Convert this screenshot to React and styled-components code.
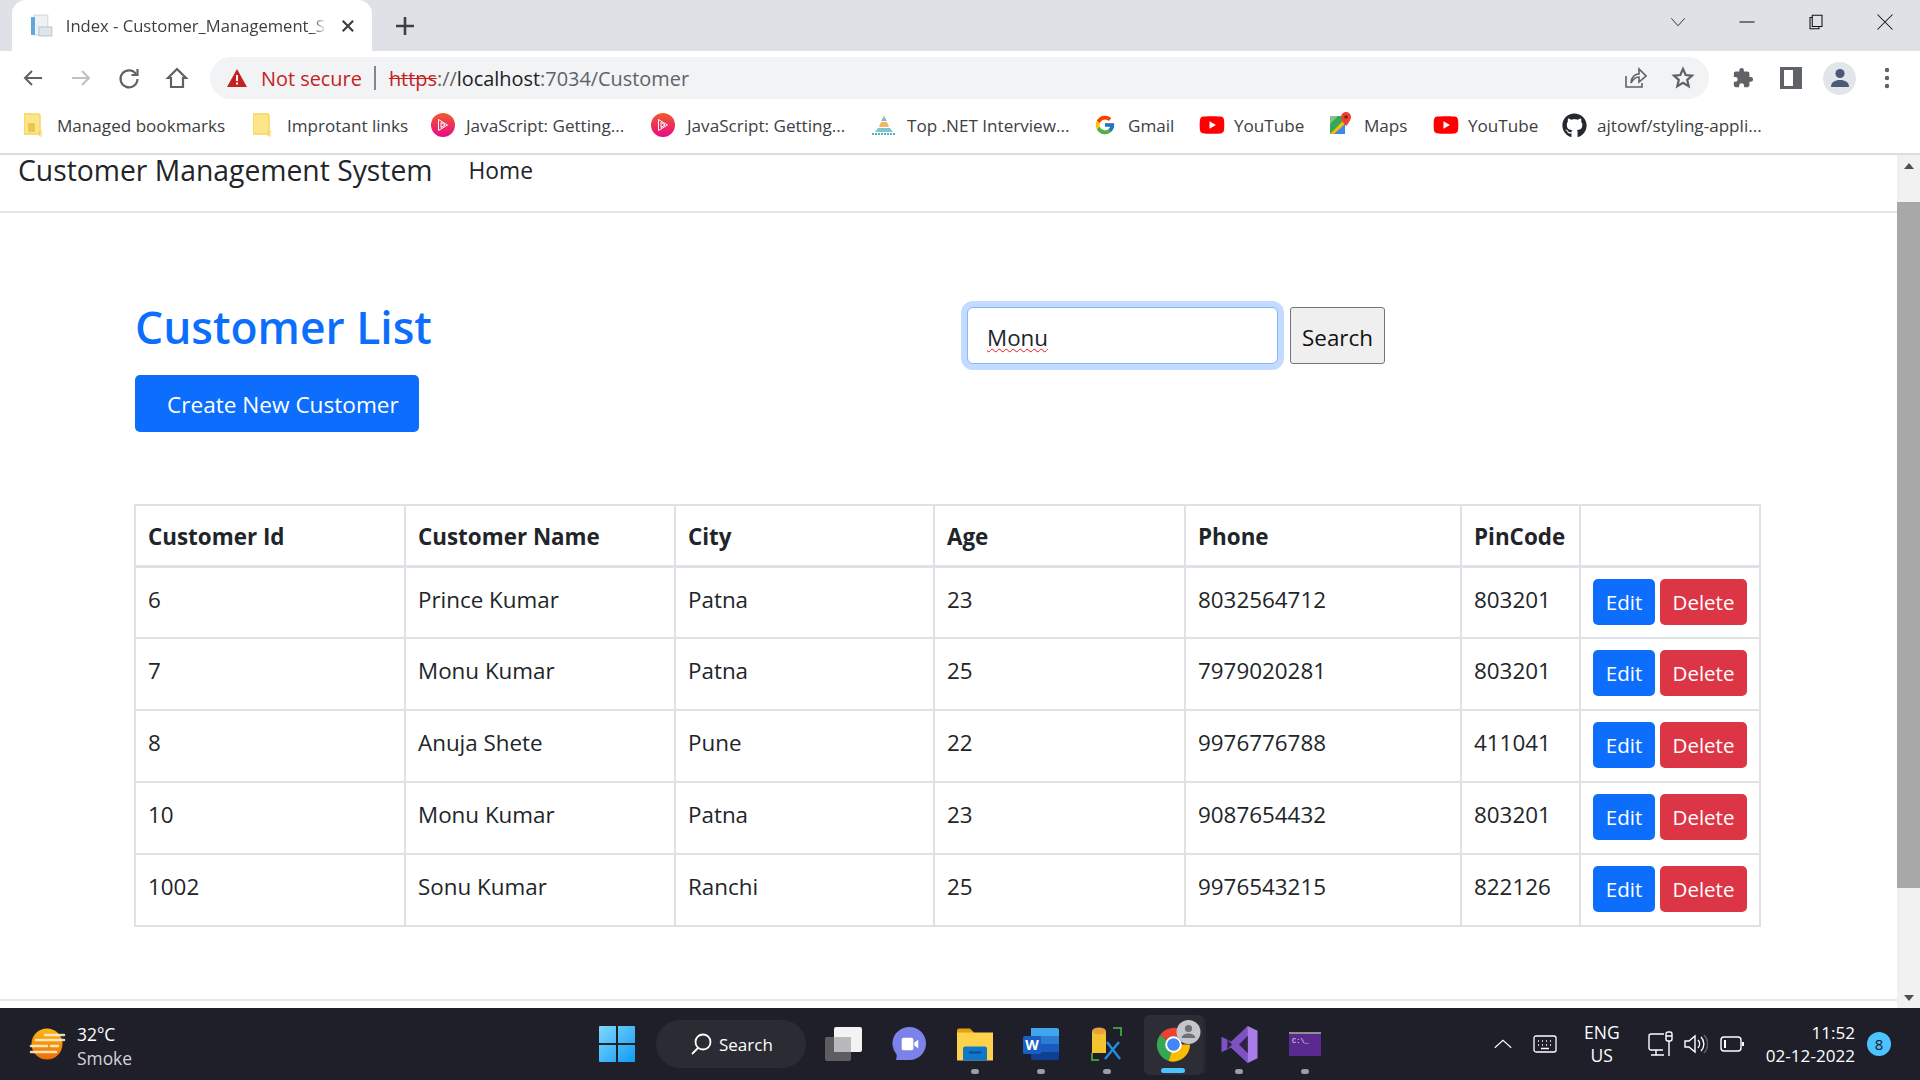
import styled, { createGlobalStyle } from "styled-components";
import { FaGithub, FaYoutube } from "react-icons/fa";
import { FcGoogle } from "react-icons/fc";

const GlobalStyle = createGlobalStyle`
  html, body {
    margin: 0;
    padding: 0;
    background: #fff;
    overflow: hidden;
  }
  body {
    font-family: "Open Sans", "Noto Sans", sans-serif;
    color: #212529;
  }
  * {
    box-sizing: border-box;
  }
`;

const bookmarks = [
  { icon: "managed", label: "Managed bookmarks", width: 229, slot: 33 },
  { icon: "folder", label: "Improtant links", width: 178, slot: 34 },
  { icon: "pluralsight", label: "JavaScript: Getting...", width: 220, slot: 35 },
  { icon: "pluralsight", label: "JavaScript: Getting...", width: 221, slot: 36 },
  { icon: "pyramid", label: "Top .NET Interview...", width: 222, slot: 35 },
  { icon: "google", label: "Gmail", width: 105, slot: 34 },
  { icon: "youtube", label: "YouTube", width: 131, slot: 35 },
  { icon: "maps", label: "Maps", width: 103, slot: 34 },
  { icon: "youtube", label: "YouTube", width: 129, slot: 35 },
  { icon: "github", label: "ajtowf/styling-appli...", width: 210, slot: 35 },
];

const customers = [
  { id: 6, name: "Prince Kumar", city: "Patna", age: 23, phone: "8032564712", pin: "803201" },
  { id: 7, name: "Monu Kumar", city: "Patna", age: 25, phone: "7979020281", pin: "803201" },
  { id: 8, name: "Anuja Shete", city: "Pune", age: 22, phone: "9976776788", pin: "411041" },
  { id: 10, name: "Monu Kumar", city: "Patna", age: 23, phone: "9087654432", pin: "803201" },
  { id: 1002, name: "Sonu Kumar", city: "Ranchi", age: 25, phone: "9976543215", pin: "822126" },
];

const columnWidths = [270, 270, 259, 251, 276, 119, 180];

const FolderIcon = ({ managed }) => (
  <svg width="18" height="24" viewBox="0 0 18 24">
    <path d="M0 1h14a2 2 0 0 1 2 2v18H0z" fill="#fde68a" stroke="#f5d35d" strokeWidth="1.4" />
    <rect x="15" y="18" width="3" height="5" rx="1" fill="none" stroke="#f5d35d" />
    {managed && <rect x="4" y="10" width="7" height="9" fill="#e9c84f" />}
  </svg>
);

const PluralsightIcon = () => (
  <svg width="24" height="24" viewBox="0 0 24 24">
    <defs>
      <linearGradient id="ps" x1="0" y1="0" x2="0" y2="1">
        <stop offset="0" stopColor="#f15b2a" />
        <stop offset="1" stopColor="#e80a89" />
      </linearGradient>
    </defs>
    <circle cx="12" cy="12" r="12" fill="url(#ps)" />
    <path d="M7.5 6.5v11l9-5.5zM10 9.5v5l4-2.5z" fill="none" stroke="#fff" strokeWidth="1" />
  </svg>
);

const PyramidIcon = () => (
  <svg width="24" height="22" viewBox="0 0 24 22">
    <path d="M12 2 15 7H9z" fill="#8fb8c0" />
    <path d="M9 8h6l2 5H7z" fill="#f3b562" />
    <path d="M6 14h12l3 4H3z" fill="#7fc4cf" />
    <path d="M0 20h24" stroke="#4eb4c4" strokeWidth="2" strokeDasharray="2 1" />
  </svg>
);

const MapsIcon = () => (
  <svg width="22" height="26" viewBox="0 0 22 26">
    <path d="M0 4h15v18H0z" fill="#34a853" />
    <path d="M0 22 15 7v15z" fill="#fbbc04" />
    <path d="M4 22 15 12v10z" fill="#4285f4" />
    <path d="M0 4h8L0 12z" fill="#7cc48b" />
    <path d="M16 0a5 5 0 0 1 5 5c0 4-5 9-5 9s-5-5-5-9a5 5 0 0 1 5-5z" fill="#ea4335" />
    <circle cx="16" cy="5" r="1.8" fill="#8c1c13" />
  </svg>
);

const BookmarkIcon = ({ kind }) => {
  if (kind === "managed") return <FolderIcon managed />;
  if (kind === "folder") return <FolderIcon />;
  if (kind === "pluralsight") return <PluralsightIcon />;
  if (kind === "pyramid") return <PyramidIcon />;
  if (kind === "google") return <FcGoogle size={22} />;
  if (kind === "youtube") return <FaYoutube size={26} color="#ff0000" />;
  if (kind === "maps") return <MapsIcon />;
  return <FaGithub size={25} color="#24292f" />;
};

const Stroke = ({ size = 24, children, color = "#5f6368", width = 2 }) => (
  <svg width={size} height={size} viewBox="0 0 24 24" fill="none" stroke={color} strokeWidth={width}>
    {children}
  </svg>
);

const WindowsLogo = () => (
  <svg width="36" height="36" viewBox="0 0 36 36">
    <defs>
      <linearGradient id="win" x1="0" y1="0" x2="1" y2="1">
        <stop offset="0" stopColor="#7fd8fb" />
        <stop offset="1" stopColor="#0f9bf5" />
      </linearGradient>
    </defs>
    <path d="M1 0h16v17H0V1a1 1 0 0 1 1-1zM19 0h16a1 1 0 0 1 1 1v16H19zM0 19h17v17H1a1 1 0 0 1-1-1zM19 19h17v16a1 1 0 0 1-1 1H19z" fill="url(#win)" />
  </svg>
);

const WeatherIcon = () => (
  <svg width="38" height="32" viewBox="0 0 38 32">
    <defs>
      <linearGradient id="sun" x1="0" y1="0" x2="0" y2="1">
        <stop offset="0" stopColor="#fdb813" />
        <stop offset="1" stopColor="#ee6c05" />
      </linearGradient>
    </defs>
    <circle cx="19" cy="16" r="15.5" fill="url(#sun)" />
    <path d="M17 7h19M8 12h28M3 18h16M23 18h7M3 24h25" stroke="#fff2d4" strokeWidth="2.6" strokeLinecap="round" opacity=".88" />
  </svg>
);

const TaskViewIcon = () => (
  <svg width="37" height="34" viewBox="0 0 37 34">
    <rect x="0" y="10" width="26" height="24" rx="2" fill="#5d5d5f" />
    <rect x="9" y="0" width="28" height="25" rx="2" fill="#f3f3f3" />
    <rect x="9" y="10" width="17" height="15" fill="#b9b9bb" />
  </svg>
);

const ChatIcon = () => (
  <svg width="35" height="35" viewBox="0 0 36 36">
    <path d="M18 0a17 17 0 0 1 0 34H4c1-2 1-5 .5-6A17 17 0 0 1 18 0z" fill="#7b83eb" />
    <rect x="10" y="11" width="12" height="13" rx="2" fill="#fff" />
    <path d="M23 16l4-3v9l-4-3z" fill="#fff" />
  </svg>
);

const ExplorerIcon = () => (
  <svg width="36" height="33" viewBox="0 0 36 32">
    <path d="M0 2a2 2 0 0 1 2-2h11l4 4v6H0z" fill="#e2a20a" />
    <path d="M0 4h36v28H0z" fill="#ffd24d" />
    <path d="M6 20a2 2 0 0 1 2-2h20a2 2 0 0 1 2 2v12H6z" fill="#0f78c9" />
    <rect x="12" y="23" width="12" height="2" fill="#0a4f8a" />
  </svg>
);

const WordIcon = () => (
  <svg width="36" height="32" viewBox="0 0 36 32">
    <path d="M8 0h26a2 2 0 0 1 2 2v6H8z" fill="#41a5ee" />
    <path d="M8 8h28v8H8z" fill="#2b7cd3" />
    <path d="M8 16h28v8H8z" fill="#185abd" />
    <path d="M8 24h28v6a2 2 0 0 1-2 2H8z" fill="#103f91" />
    <rect x="0" y="8" width="18" height="18" rx="1.5" fill="#1a5fc2" />
    <text x="9" y="22" fill="#fff" fontSize="14" fontWeight="700" textAnchor="middle" fontFamily="Open Sans">W</text>
  </svg>
);

const DbToolIcon = () => (
  <svg width="32" height="34" viewBox="0 0 32 34" fill="none">
    <path d="M1 4h14v22H1z" fill="#f4c430" />
    <ellipse cx="8" cy="4" rx="7" ry="3.5" fill="#e8a13c" />
    <path d="M22 1h8v8M1 26v7h7" stroke="#3c9a3c" strokeWidth="2" />
    <path d="M14 32 28 15M29 32 16 15" stroke="#1f8fe0" strokeWidth="2.4" />
  </svg>
);

const ChromeIcon = () => (
  <svg width="37" height="37" viewBox="0 0 38 38">
    <path d="M19 19 5 9.5A17.5 17.5 0 0 1 35 11H19z" fill="#ea4335" />
    <path d="M19 19 5 9.5A17.5 17.5 0 0 0 14 36z" fill="#34a853" />
    <path d="M19 19h17A17.5 17.5 0 0 1 14 36z" fill="#fbbc04" />
    <circle cx="19" cy="19" r="8.5" fill="#fff" />
    <circle cx="19" cy="19" r="6.5" fill="#4285f4" />
  </svg>
);

const ProfileBubble = () => (
  <svg width="25" height="24" viewBox="0 0 24 24">
    <circle cx="12" cy="12" r="12" fill="#c4c6ca" />
    <circle cx="12" cy="8.5" r="3.6" fill="#6d7278" />
    <path d="M5 18c1-3.5 4-4.5 7-4.5s6 1 7 4.5z" fill="#6d7278" />
  </svg>
);

const VisualStudioIcon = () => (
  <svg width="37" height="37" viewBox="0 0 37 38">
    <path d="M27 0 37 5v28l-10 5-17-16z" fill="#a97de8" />
    <path d="M27 0v38l-17-16L0 27V11l10 5z" fill="#7d53c4" />
    <path d="M6 14v10l5-5zM27 10l-9 9 9 9z" fill="#2f2340" />
  </svg>
);

const TerminalIcon = () => (
  <svg width="32" height="24" viewBox="0 0 32 24">
    <rect width="32" height="24" fill="#5b2a91" />
    <rect width="32" height="2" fill="#8d8d92" />
    <text x="3" y="11" fill="#e8e8e8" fontSize="7" fontFamily="Liberation Mono">C:\_</text>
  </svg>
);

const taskbarApps = [
  { icon: <TaskViewIcon /> },
  { icon: <ChatIcon /> },
  { icon: <ExplorerIcon />, dot: true },
  { icon: <WordIcon />, dot: true },
  { icon: <DbToolIcon />, dot: true },
  { icon: <ChromeIcon />, active: true },
  { icon: <VisualStudioIcon />, dot: true },
  { icon: <TerminalIcon />, dot: true },
];

export default function App() {
  return (
    <>
      <GlobalStyle />
      <Screen>
        <TabStrip>
          <Tab>
            <svg width="24" height="24" viewBox="0 0 24 24">
              <rect x="4" y="1" width="14" height="20" fill="#eef1f5" stroke="#cfd6de" />
              <rect x="1" y="3" width="4" height="18" fill="#5fa8dc" />
              <rect x="9" y="13" width="13" height="9" fill="#dfe5ec" stroke="#b9c3cf" />
            </svg>
            <TabTitle>Index - Customer_Management_S</TabTitle>
            <Stroke size={18} color="#3c4043" width={3}>
              <path d="M5 5l14 14M19 5 5 19" />
            </Stroke>
          </Tab>
          <NewTab>
            <Stroke size={24} color="#3c4043" width={2.6}>
              <path d="M12 3v18M3 12h18" />
            </Stroke>
          </NewTab>
          <WindowControls>
            <Stroke size={18} color="#222" width={1.2}>
              <path d="M3 7l9 10 9-10" />
            </Stroke>
            <Stroke size={18} color="#111" width={1.4}>
              <path d="M2 12h20" />
            </Stroke>
            <Stroke size={18} color="#111" width={1.4}>
              <path d="M7 6h-3v15h12v-3M7 18V3h13v15z" />
            </Stroke>
            <Stroke size={18} color="#111" width={1.4}>
              <path d="M2 2l20 20M22 2 2 22" />
            </Stroke>
          </WindowControls>
        </TabStrip>

        <Toolbar>
          <NavIcons>
            <Stroke color="#5f6368" width={2}>
              <path d="M21 12H4M11 5l-7 7 7 7" />
            </Stroke>
            <Stroke color="#bdc1c6" width={2}>
              <path d="M3 12h17M13 5l7 7-7 7" />
            </Stroke>
            <Stroke color="#5f6368" width={2.2}>
              <path d="M19 8a8.5 8.5 0 1 0 1.5 5" />
              <path d="M20.5 3v6h-6" />
            </Stroke>
            <Stroke color="#5f6368" width={2.2}>
              <path d="M12 3 3 12h3v9h12v-9h3z" />
            </Stroke>
          </NavIcons>
          <Omnibox>
            <svg width="20" height="18" viewBox="0 0 20 18">
              <path d="M10 0 20 18H0z" fill="#c5221f" />
              <rect x="9" y="6" width="2" height="6" fill="#fff" />
              <rect x="9" y="13.5" width="2" height="2" fill="#fff" />
            </svg>
            <NotSecure>Not secure</NotSecure>
            <OmniDivider />
            <UrlText>
              <Https>https</Https>
              <UrlDim>://</UrlDim>localhost<UrlDim>:7034/Customer</UrlDim>
            </UrlText>
            <OmniActions>
              <Stroke color="#5f6368" width={1.6}>
                <path d="M3 10v11h16v-4M8 17c0-6 4-9 8-9V3l7 7-7 6v-5c-3 0-6 2-8 6z" />
              </Stroke>
              <Stroke color="#5f6368" width={2.2}>
                <path d="m12 3 2.7 6 6.3.6-4.8 4.2 1.5 6.4L12 16.8l-5.7 3.4 1.5-6.4L3 9.6 9.3 9z" />
              </Stroke>
            </OmniActions>
          </Omnibox>
          <ToolbarActions>
            <svg width="22" height="22" viewBox="0 0 24 24">
              <path
                d="M20.5 11H19V7a2 2 0 0 0-2-2h-4V3.5a2.5 2.5 0 0 0-5 0V5H4a2 2 0 0 0-2 2v3.8h1.5a2.7 2.7 0 0 1 0 5.4H2V20a2 2 0 0 0 2 2h3.8v-1.5a2.7 2.7 0 0 1 5.4 0V22H17a2 2 0 0 0 2-2v-4h1.5a2.5 2.5 0 0 0 0-5z"
                fill="#5f6368"
              />
            </svg>
            <svg width="22" height="22" viewBox="0 0 22 22">
              <path d="M0 0h22v22H0zM4 3v16h9V3z" fill="#5f6368" fillRule="evenodd" />
            </svg>
            <Avatar>
              <svg width="20" height="20" viewBox="0 0 20 20">
                <circle cx="10" cy="5.5" r="4.6" fill="#4b5a75" />
                <path d="M1 19c0-5 4-7 9-7s9 2 9 7z" fill="#4b5a75" />
              </svg>
            </Avatar>
            <svg width="6" height="22" viewBox="0 0 6 22">
              <circle cx="3" cy="3" r="2.2" fill="#5f6368" />
              <circle cx="3" cy="11" r="2.2" fill="#5f6368" />
              <circle cx="3" cy="19" r="2.2" fill="#5f6368" />
            </svg>
          </ToolbarActions>
        </Toolbar>

        <BookmarksBar>
          {bookmarks.map((b, i) => (
            <Bookmark key={i} $width={b.width}>
              <BookmarkSlot $width={b.slot}>
                <BookmarkIcon kind={b.icon} />
              </BookmarkSlot>
              <BookmarkLabel>{b.label}</BookmarkLabel>
            </Bookmark>
          ))}
        </BookmarksBar>

        <Viewport>
          <Page>
            <Navbar>
              <Brand>Customer Management System</Brand>
              <NavLink>Home</NavLink>
            </Navbar>
            <Content>
              <TopRow>
                <TitleColumn>
                  <Title>Customer List</Title>
                  <CreateButton>Create New Customer</CreateButton>
                </TitleColumn>
                <SearchForm>
                  <SearchInput defaultValue="Monu" />
                  <SearchButton>Search</SearchButton>
                </SearchForm>
              </TopRow>
              <Table>
                <colgroup>
                  {columnWidths.map((w, i) => (
                    <Column key={i} $width={w} />
                  ))}
                </colgroup>
                <thead>
                  <tr>
                    <HeadCell>Customer Id</HeadCell>
                    <HeadCell>Customer Name</HeadCell>
                    <HeadCell>City</HeadCell>
                    <HeadCell>Age</HeadCell>
                    <HeadCell>Phone</HeadCell>
                    <HeadCell>PinCode</HeadCell>
                    <HeadCell />
                  </tr>
                </thead>
                <tbody>
                  {customers.map((c) => (
                    <tr key={c.id}>
                      <Cell>{c.id}</Cell>
                      <Cell>{c.name}</Cell>
                      <Cell>{c.city}</Cell>
                      <Cell>{c.age}</Cell>
                      <Cell>{c.phone}</Cell>
                      <Cell>{c.pin}</Cell>
                      <ActionCell>
                        <Actions>
                          <RowButton $width={62} $color="#0d6efd">Edit</RowButton>
                          <RowButton $width={87} $color="#dc3545">Delete</RowButton>
                        </Actions>
                      </ActionCell>
                    </tr>
                  ))}
                </tbody>
              </Table>
            </Content>
            <FooterLine />
          </Page>
          <Scrollbar>
            <ScrollArrow $up />
            <ScrollThumb />
            <ScrollArrow />
          </Scrollbar>
        </Viewport>

        <Taskbar>
          <Weather>
            <WeatherIcon />
            <WeatherText>
              <strong>32°C</strong>
              <span>Smoke</span>
            </WeatherText>
          </Weather>
          <StartButton>
            <WindowsLogo />
          </StartButton>
          <SearchPill>
            <Stroke size={24} color="#fff" width={1.8}>
              <circle cx="14" cy="10" r="7.5" />
              <path d="M9 16l-6 6" />
            </Stroke>
            Search
          </SearchPill>
          <Apps>
            {taskbarApps.map((app, i) => (
              <AppSlot key={i} $active={app.active}>
                {app.icon}
                {app.active && (
                  <ProfileBadge>
                    <ProfileBubble />
                  </ProfileBadge>
                )}
                {app.dot && <AppDot />}
                {app.active && <ActiveBar />}
              </AppSlot>
            ))}
          </Apps>
          <Tray>
            <TrayItem>
              <Stroke size={18} color="#fff" width={1.4}>
                <path d="M1 17 12 7l11 10" />
              </Stroke>
            </TrayItem>
            <TrayItem $ml={21}>
              <svg width="24" height="18" viewBox="0 0 24 18" fill="none" stroke="#fff">
                <rect x="1" y="1" width="22" height="16" rx="2" strokeWidth="1.3" />
                <path d="M5 6h1M9 6h1M13 6h1M17 6h1M5 10h1M9 10h1M13 10h1M17 10h1M8 13.5h8" strokeWidth="1.5" />
              </svg>
            </TrayItem>
            <Lang>
              <span>ENG</span>
              <span>US</span>
            </Lang>
            <TrayItem $ml={27}>
              <svg width="25" height="26" viewBox="0 0 25 26" fill="none" stroke="#fff" strokeWidth="1.4">
                <path d="M15 19H3a2 2 0 0 1-2-2V5a2 2 0 0 1 2-2h13M8 19v5M3 24h13" />
                <rect x="18" y="1" width="6" height="9" rx="2" />
                <path d="M21 10v15M18 5h6" />
              </svg>
            </TrayItem>
            <TrayItem $ml={11}>
              <svg width="24" height="22" viewBox="0 0 24 22" fill="none" stroke="#fff" strokeWidth="1.4">
                <path d="M1 8v6h4l6 5V3L5 8z" />
                <path d="M14 7a6 6 0 0 1 0 8M17 4a10 10 0 0 1 0 14" />
                <path d="M20 2a13 13 0 0 1 0 18" stroke="#666" />
              </svg>
            </TrayItem>
            <TrayItem $ml={12}>
              <svg width="24" height="16" viewBox="0 0 24 16" fill="none" stroke="#fff" strokeWidth="1.4">
                <rect x="1" y="1" width="20" height="14" rx="3" />
                <path d="M5 4v8" strokeWidth="2" />
                <path d="M23 6v4" strokeWidth="2" />
              </svg>
            </TrayItem>
            <Clock>
              <span>11:52</span>
              <span>02-12-2022</span>
            </Clock>
            <NotificationBadge>8</NotificationBadge>
          </Tray>
        </Taskbar>
      </Screen>
    </>
  );
}

const Screen = styled.div`
  width: 1920px;
  height: 1080px;
  display: flex;
  flex-direction: column;
  overflow: hidden;
`;

const TabStrip = styled.div`
  height: 51px;
  flex: none;
  background: #dee1e6;
  display: flex;
  align-items: flex-end;
  padding-left: 12px;
`;

const Tab = styled.div`
  width: 360px;
  height: 51px;
  background: #fff;
  border-radius: 14px 14px 0 0;
  display: flex;
  align-items: center;
  padding: 0 15px 0 18px;
  gap: 12px;
`;

const TabTitle = styled.span`
  width: 264px;
  overflow: hidden;
  white-space: nowrap;
  font-size: 16.6px;
  color: #3c4043;
  -webkit-mask-image: linear-gradient(to right, #000 94%, transparent);
  mask-image: linear-gradient(to right, #000 94%, transparent);
`;

const NewTab = styled.div`
  width: 66px;
  height: 51px;
  display: flex;
  align-items: center;
  justify-content: center;
`;

const WindowControls = styled.div`
  margin-left: auto;
  height: 44px;
  display: flex;
  align-self: flex-start;
  align-items: center;
  gap: 51px;
  padding-right: 26px;
`;

const Toolbar = styled.div`
  height: 48px;
  flex: none;
  background: #fff;
  display: flex;
  align-items: center;
  padding: 6px 0 0 21px;
`;

const NavIcons = styled.div`
  display: flex;
  gap: 24px;
  width: 189px;
`;

const Omnibox = styled.div`
  width: 1499px;
  height: 42px;
  background: #f1f3f4;
  border-radius: 21px;
  display: flex;
  align-items: center;
  padding: 0 14px 0 17px;
`;

const NotSecure = styled.span`
  margin-left: 14px;
  font-size: 19.9px;
  color: #c5221f;
`;

const OmniDivider = styled.span`
  width: 2px;
  height: 24px;
  margin: 0 13px 0 12px;
  background: #80868b;
`;

const UrlText = styled.span`
  font-size: 19.9px;
  color: #202124;
`;

const Https = styled.span`
  color: #c5221f;
  text-decoration: line-through;
`;

const UrlDim = styled.span`
  color: #5f6368;
`;

const OmniActions = styled.div`
  margin-left: auto;
  display: flex;
  gap: 24px;
`;

const ToolbarActions = styled.div`
  display: flex;
  align-items: center;
  margin-left: 23px;
  gap: 26px;
`;

const Avatar = styled.div`
  width: 33px;
  height: 33px;
  border-radius: 50%;
  background: #e2e5ea;
  display: flex;
  align-items: center;
  justify-content: center;
  margin: 0 2px 0 -5px;
`;

const BookmarksBar = styled.div`
  height: 56px;
  flex: none;
  background: #fff;
  border-bottom: 2px solid #dadce0;
  display: flex;
  align-items: center;
  padding: 0 0 2px 24px;
`;

const Bookmark = styled.div`
  width: ${(p) => p.$width}px;
  flex: none;
  display: flex;
  align-items: center;
`;

const BookmarkSlot = styled.span`
  width: ${(p) => p.$width}px;
  flex: none;
  display: flex;
  align-items: center;
`;

const BookmarkLabel = styled.span`
  white-space: nowrap;
  font-size: 17.1px;
  color: #3c4043;
`;

const Viewport = styled.div`
  flex: 1;
  min-height: 0;
  display: flex;
`;

const Page = styled.div`
  flex: 1;
  min-width: 0;
  display: flex;
  flex-direction: column;
`;

const Navbar = styled.nav`
  height: 58px;
  flex: none;
  border-bottom: 2px solid #e3e6ea;
  display: flex;
  gap: 36px;
  padding-left: 18px;
  color: #212529;
`;

const Brand = styled.a`
  font-size: 28.3px;
  line-height: 31px;
`;

const NavLink = styled.a`
  font-size: 22.8px;
  line-height: 32px;
`;

const Content = styled.main`
  padding: 0 137px 0 134px;
`;

const TopRow = styled.div`
  height: 291px;
  display: flex;
`;

const TitleColumn = styled.div`
  width: 827px;
  padding: 81px 0 0 1px;
`;

const Title = styled.h1`
  margin: 0 0 14px;
  font-size: 44.4px;
  line-height: 67px;
  font-weight: 600;
  color: #0d6efd;
`;

const CreateButton = styled.button`
  display: block;
  width: 284px;
  height: 57px;
  border: 0;
  border-radius: 5px;
  background: #0d6efd;
  color: #fff;
  font: 400 22.6px "Open Sans", sans-serif;
  text-align: left;
  padding: 1px 0 0 32px;
`;

const SearchForm = styled.form`
  display: flex;
  gap: 12px;
  padding: 94px 0 0 6px;
  align-items: flex-start;
`;

const SearchInput = styled.input`
  width: 311px;
  height: 57px;
  border: 1.5px solid #86b7fe;
  border-radius: 6px;
  box-shadow: 0 0 0 6px #c2dbfe;
  outline: 0;
  padding: 4px 19px 0;
  color: #212529;
  font: 400 22.4px "Open Sans", sans-serif;
  text-decoration: underline wavy #ee1122 1.2px;
  text-underline-offset: 2px;
`;

const SearchButton = styled.button`
  width: 95px;
  height: 57px;
  border: 1.5px solid #767676;
  border-radius: 3px;
  background: #efefef;
  color: #111;
  font: 400 22.4px "Open Sans", sans-serif;
  padding: 3px 0 0;
`;

const Table = styled.table`
  width: 1625px;
  table-layout: fixed;
  border-collapse: collapse;
  color: #212529;
  font-size: 22.4px;
`;

const Column = styled.col`
  width: ${(p) => p.$width}px;
`;

const HeadCell = styled.th`
  height: 61px;
  padding: 2px 12px 0;
  text-align: left;
  font-weight: 700;
  white-space: nowrap;
  border: 2px solid #dee2e6;
  border-bottom-width: 3px;
`;

const Cell = styled.td`
  height: 72px;
  padding: 16px 12px 0;
  vertical-align: top;
  border: 2px solid #dee2e6;
`;

const ActionCell = styled(Cell)`
  padding: 11px 12px 0;
`;

const Actions = styled.div`
  display: flex;
  gap: 5px;
`;

const RowButton = styled.button`
  flex: 0 0 ${(p) => p.$width}px;
  height: 46px;
  padding: 0;
  border: 0;
  border-radius: 5px;
  background: ${(p) => p.$color};
  color: #fff;
  font: 400 20.5px "Open Sans", sans-serif;
`;

const FooterLine = styled.div`
  margin-top: auto;
  height: 9px;
  border-top: 2px solid #e3e6ea;
`;

const Scrollbar = styled.div`
  width: 23px;
  background: #f1f1f1;
  display: flex;
  flex-direction: column;
  align-items: center;
`;

const ScrollArrow = styled.div`
  flex: none;
  width: 0;
  height: 6px;
  border-left: 5px solid transparent;
  border-right: 5px solid transparent;
  margin-top: ${(p) => (p.$up ? "8px" : "auto")};
  margin-bottom: ${(p) => (p.$up ? "33px" : "7px")};
  ${(p) => (p.$up ? "border-bottom" : "border-top")}: 6px solid #505050;
`;

const ScrollThumb = styled.div`
  width: 100%;
  height: 686px;
  flex: none;
  background: #a8a8a8;
`;

const Taskbar = styled.footer`
  height: 72px;
  flex: none;
  background: #1e1f29;
  color: #fff;
  display: flex;
  align-items: center;
  padding-left: 28px;
`;

const Weather = styled.div`
  width: 571px;
  display: flex;
  align-items: center;
  gap: 11px;
`;

const WeatherText = styled.div`
  display: flex;
  flex-direction: column;
  margin-top: 3px;
  font-size: 17.4px;
  line-height: 24px;

  strong {
    font-weight: 400;
  }
  span {
    color: #d4d4d6;
  }
`;

const StartButton = styled.div`
  width: 36px;
  height: 36px;
  margin-right: 21px;
`;

const SearchPill = styled.div`
  width: 150px;
  height: 48px;
  margin-right: 4px;
  border-radius: 24px;
  background: #2a2b33;
  display: flex;
  align-items: center;
  gap: 6px;
  padding-left: 33px;
  font-size: 17px;
`;

const Apps = styled.div`
  display: flex;
  height: 72px;
`;

const AppSlot = styled.div`
  position: relative;
  width: 66px;
  display: flex;
  align-items: center;
  justify-content: center;
  ${(p) =>
    p.$active &&
    `
    &::before {
      content: "";
      position: absolute;
      left: 4px;
      right: 3px;
      top: 7px;
      bottom: 5px;
      border-radius: 6px;
      background: #2d2e35;
      box-shadow: 4px 0 0 -1px #26272e;
    }
    & > svg { position: relative; }
  `}
`;

const ProfileBadge = styled.div`
  position: absolute;
  top: 12px;
  right: 5px;
  height: 24px;
`;

const AppDot = styled.span`
  position: absolute;
  bottom: 6px;
  width: 8px;
  height: 5px;
  border-radius: 3px;
  background: #9d9ea3;
`;

const ActiveBar = styled.span`
  position: absolute;
  bottom: 7px;
  width: 24px;
  height: 5px;
  border-radius: 3px;
  background: #4cc2ff;
`;

const Tray = styled.div`
  margin-left: auto;
  display: flex;
  align-items: center;
  padding-right: 29px;
`;

const TrayItem = styled.div`
  display: flex;
  margin-left: ${(p) => p.$ml || 0}px;
`;

const Lang = styled.div`
  margin-left: 26px;
  width: 38px;
  display: flex;
  flex-direction: column;
  align-items: center;
  font-size: 17.5px;
  line-height: 23px;
`;

const Clock = styled.div`
  margin-left: 22px;
  display: flex;
  flex-direction: column;
  align-items: flex-end;
  font-size: 17.1px;
  line-height: 23px;
`;

const NotificationBadge = styled.div`
  margin-left: 12px;
  width: 24px;
  height: 24px;
  border-radius: 50%;
  background: #4cc2ff;
  color: #10202c;
  font-size: 15px;
  display: flex;
  align-items: center;
  justify-content: center;
`;
